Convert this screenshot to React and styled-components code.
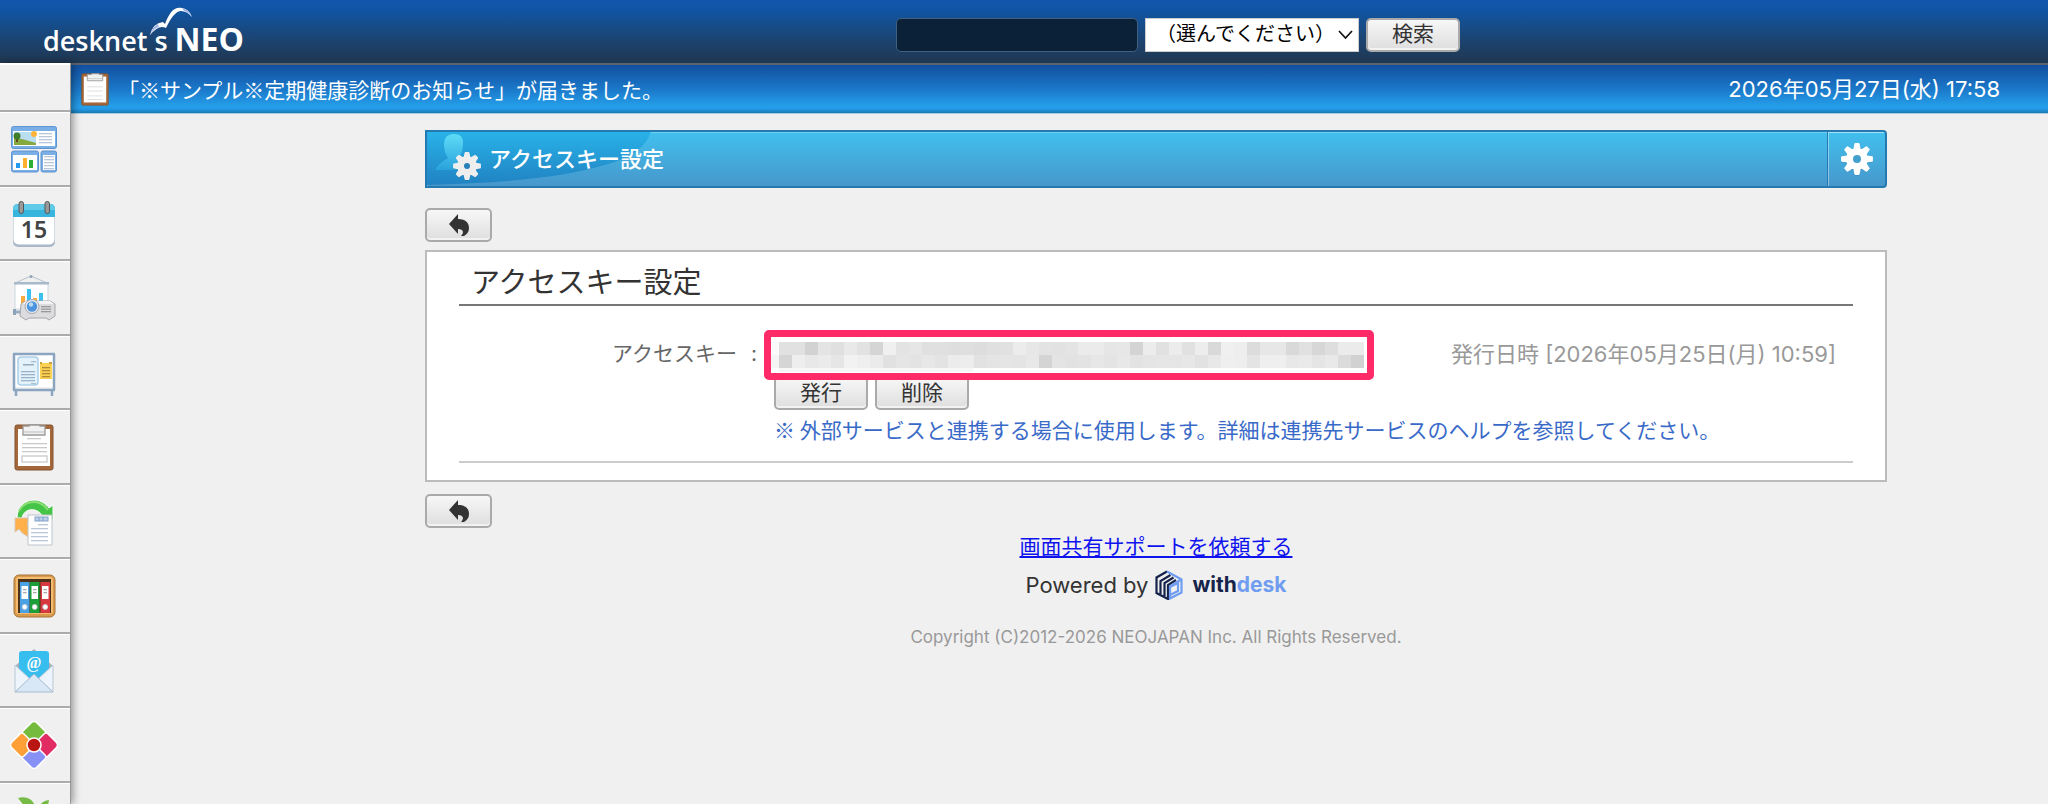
import React from "react";
import styled, { createGlobalStyle } from "styled-components";

const japanese = `"Noto Sans CJK JP", sans-serif`;

const GlobalStyle = createGlobalStyle`
  *, *::before, *::after { box-sizing: border-box; }
  html, body { margin: 0; padding: 0; }
  body {
    background: #f0f0f0;
    color: #333;
    font-family: Inter, ${japanese};
    font-size: 21px;
    line-height: 30px;
  }
  button, input, select { font: inherit; }
  h1, h2, p { margin: 0; }
`;

const Page = styled.div`
  display: flex;
  flex-direction: column;
  height: 100vh;
  overflow: hidden;
`;

const Header = styled.header`
  display: flex;
  flex: none;
  align-items: center;
  height: 63px;
  background: linear-gradient(#1156ab, #1055a4 16%, #1b4574 60%, #203750);
`;

const Brand = styled.a`
  display: flex;
  align-items: flex-end;
  flex: none;
  width: 308px;
  height: 63px;
  padding: 0 0 4px 43px;
  color: #fff;
  font-family: "Open Sans", sans-serif;
  text-decoration: none;
`;

const BrandName = styled.span`
  font-size: 27px;
  font-weight: 600;
  line-height: 36px;
`;

const BrandEdition = styled.span`
  margin-left: 7px;
  font-size: 32px;
  font-weight: 700;
  line-height: 40px;
`;

const BrandBird = styled.svg`
  position: absolute;
  left: 148px;
  top: 7px;
  width: 46px;
  height: 30px;
`;

const Search = styled.form`
  display: flex;
  gap: 7px;
  margin: 6px auto 0;
`;

const SearchInput = styled.input`
  width: 242px;
  height: 34px;
  padding: 0 8px;
  border: 1px solid #41607f;
  border-radius: 5px;
  background: #0b2137;
  color: #fff;
`;

const SelectBox = styled.div`
  position: relative;
  width: 214px;

  svg {
    position: absolute;
    right: 6px;
    top: 12px;
    pointer-events: none;
  }
`;

const Select = styled.select`
  width: 100%;
  height: 34px;
  padding: 0 24px 2px 10px;
  appearance: none;
  border: 1px solid #ccc;
  border-radius: 0;
  background: #fff;
  color: #000;
  font-size: 20px;
`;

const Button = styled.button`
  display: inline-flex;
  align-items: center;
  justify-content: center;
  width: ${(p) => (p.$icon ? 67 : 94)}px;
  height: 34px;
  padding: 0 0 1px;
  border: 2px solid #aaa;
  border-radius: 5px;
  background: linear-gradient(#f7f7f7, #dedede);
  box-shadow: inset 0 -2px 0 #f2f2f2;
  color: #333;
  line-height: 28px;
`;

const Body = styled.div`
  display: flex;
  flex: 1;
  min-height: 0;
`;

const Sidebar = styled.nav`
  position: relative;
  flex: none;
  width: 71px;
  border-right: 1px solid #999;
  background: #f0f0f0;
  box-shadow: 2px 0 8px rgba(0, 0, 0, 0.4);
`;

const AppList = styled.ul`
  margin: 0;
  padding: 45px 0 0;
  border-top: 2px solid #fff;
  list-style: none;
`;

const AppItem = styled.li`
  height: 75px;
  border-top: 2px solid #ababab;

  &:nth-child(even) { height: 74px; }
`;

const AppLink = styled.a`
  display: flex;
  justify-content: center;
  padding: 12px 3px 0 0;
  height: 100%;
  border-top: 1px solid #fff;

  svg { width: 48px; height: 48px; }
`;

const Column = styled.div`
  flex: 1;
  min-width: 0;
`;

const Ticker = styled.div`
  display: flex;
  align-items: center;
  height: 51px;
  padding: 0 48px 0 10px;
  border-top: 2px solid #5a6470;
  border-bottom: 1px solid #a8cde0;
  background: linear-gradient(#124f9f, #1b78c9 50%, #259ee9 86%, #249bea 91%, #1b79b2);
  color: #fff;

  svg { flex: none; margin-right: 9px; }
  p { font-family: ${japanese}; }
  time { margin-left: auto; font-size: 22px; }
`;

const Main = styled.main`
  padding: 16px 0 0 193px;
`;

const Content = styled.div`
  width: 100%;
  max-width: 1462px;
  margin: 0 auto;
`;

const TitleBar = styled.div`
  display: flex;
  height: 58px;
  border: 2px solid #2379b0;
  border-radius: 0 4px 4px 0;
  background: linear-gradient(#41c0ee, #4797cb);
  box-shadow: inset 1px 1px 0 rgba(255, 255, 255, 0.25);
  overflow: hidden;
`;

const TitleArt = styled.svg`
  flex: none;
  width: 226px;
  height: 54px;
`;

const Title = styled.h1`
  flex: 1;
  margin-left: -164px;
  color: #fff;
  font-size: 22px;
  font-weight: 500;
  line-height: 54px;
`;

const SettingsLink = styled.a`
  display: flex;
  align-items: center;
  justify-content: center;
  width: 58px;
  border-left: 1px solid #2379b0;
  box-shadow: inset 1px 1px 0 rgba(255, 255, 255, 0.4);
`;

const Toolbar = styled.div`
  display: flex;
  padding: ${(p) => (p.$bottom ? "12px 0 0" : "20px 0 8px")};
`;

const Panel = styled.section`
  padding: 10px 32px 17px;
  border: 2px solid #bbb;
  background: #fff;
`;

const PanelTitle = styled.h2`
  padding-left: 12px;
  border-bottom: 2px solid #777;
  font-size: 29px;
  font-weight: 400;
  line-height: 42px;
`;

const Row = styled.div`
  display: grid;
  grid-template-columns: 298px 1fr;
  column-gap: 17px;
  padding: 33px 17px 17px 0;
  border-bottom: 2px solid #ccc;
`;

const RowLabel = styled.div`
  display: flex;
  justify-content: flex-end;
  gap: 14px;
  color: #666;
`;

const KeyLine = styled.div`
  position: relative;
  display: flex;
  justify-content: flex-end;
  height: 37px;
  color: #999;
  font-size: 22px;
`;

const KeyHighlight = styled.div`
  position: absolute;
  left: -10px;
  top: -9px;
  width: 610px;
  height: 50px;
  padding: 5px 0;
  border: 7px solid #ff2a68;
  border-radius: 5px;
  background: #fff;

  svg { display: block; }
`;

const Actions = styled.div`
  display: flex;
  gap: 7px;
`;

const Note = styled.p`
  margin-top: 4px;
  color: #3a6ac8;
  font-family: ${japanese};
`;

const Footer = styled.footer`
  display: flex;
  flex-direction: column;
  align-items: center;
  padding-top: 4px;

  a { color: #0f13ee; }
  small { margin-top: 22px; color: #999; font-size: 17px; }
`;

const Powered = styled.p`
  display: flex;
  align-items: center;
  margin-top: 8px;
  font-size: 22px;

  svg { margin: 0 9px 0 7px; }
`;

const WithDesk = styled.b`
  color: #16234b;
  font-size: 21px;
  font-weight: 700;
  span { color: #709df0; }
`;

const lines = (x, w, ys, color = "#b8c7da") =>
  ys.map((y) => <rect key={y} x={x} y={y} width={w} height="1.3" fill={color} />);

const PortalIcon = () => (
  <svg viewBox="0 0 48 48">
    <g fill="#79aee6" stroke="#5d94d2">
      <rect x="1.5" y="1.5" width="45" height="22" rx="2" />
      <rect x="1.5" y="26" width="27" height="21" rx="2" />
      <rect x="31" y="26" width="15.5" height="21" rx="2" />
    </g>
    <g fill="#fff">
      <rect x="3" y="6" width="42" height="15" />
      <rect x="3" y="30" width="24" height="15" />
      <rect x="33" y="30" width="12" height="15" />
    </g>
    <rect x="4" y="7" width="22" height="13" fill="#b9def0" />
    <path d="M4 20v-7l8 1 14 4v2z" fill="#83a93f" />
    <path d="M7 17v-4" stroke="#65451b" strokeWidth="2" />
    <circle cx="7" cy="11" r="3.5" fill="#3f7c2c" />
    <circle cx="24" cy="9" r="3" fill="#ffb43b" />
    {lines(29, 13, [8, 11, 14, 17])}
    {lines(34, 10, [31, 34, 37, 40, 43])}
    <rect x="6" y="38" width="4" height="5" fill="#239aef" />
    <rect x="13" y="33" width="4" height="10" fill="#ffaf2b" />
    <rect x="19" y="35" width="4" height="8" fill="#2dae37" />
  </svg>
);

const CalendarIcon = () => (
  <svg viewBox="0 0 48 48">
    <rect x="3" y="5" width="42" height="42" rx="5" fill="#a9b9c9" />
    <rect x="3.5" y="5" width="41" height="39.5" rx="5" fill="#fff" />
    <path d="M3 17V9q0-5 5-5h32q5 0 5 5v8z" fill="#38b5dd" />
    <path d="M3 10q0-6 5-6h32q5 0 5 6z" fill="#5fcbe9" />
    {[11, 37].map((x) => (
      <rect key={x} x={x - 2} y="1.5" width="4.5" height="12" rx="2.2" fill="#9a9a9a" stroke="#555" />
    ))}
    <text x="24" y="38" textAnchor="middle" fontFamily="Noto Sans, sans-serif" fontWeight="600" fontSize="23" fill="#444">15</text>
  </svg>
);

const ProjectorIcon = () => (
  <svg viewBox="0 0 48 48">
    <path d="M5 9 21 2l16 7" fill="none" stroke="#b5c2d1" />
    <circle cx="21" cy="2.5" r="1.5" fill="#91a4b8" />
    <rect x="5" y="9" width="33" height="26" fill="#fff" stroke="#ccd5dc" />
    <rect x="4" y="8" width="35" height="2.5" fill="#a8b9cc" />
    <rect x="11" y="22" width="4" height="10" fill="#ffaa3e" />
    <rect x="17" y="15" width="4" height="14" fill="#3cc0f2" />
    <rect x="23" y="24" width="4" height="8" fill="#ffaa3e" />
    <rect x="29" y="19" width="4" height="10" fill="#3cc0f2" />
    <path d="M4 38h9" stroke="#9aaec2" strokeWidth="3" />
    <rect x="3" y="35" width="3" height="6" fill="#8ea3b8" />
    <path d="m11 30 5-3h24l5 3v12l-3 2-3 2-3-2H19l-3 2-3-2-3-2z" fill="#dcdcdf" stroke="#a4a6aa" />
    <path d="M12 30h32l-4-3H16z" fill="#f4f4f6" />
    <circle cx="22" cy="32.5" r="7" fill="#e8ebf0" stroke="#a6a8b0" />
    <circle cx="22" cy="32.5" r="5.2" fill="#4c94de" />
    <circle cx="21" cy="30.5" r="2.2" fill="#b9ddf7" />
    {lines(31, 10, [32, 34.5, 37], "#999")}
  </svg>
);

const BoardIcon = () => (
  <svg viewBox="0 0 48 48">
    <rect x="5" y="6" width="38" height="32" fill="#fff" />
    <path d="M3 5h42M4 5v36M44 5v36M3 41h42M6 42v5M42 42v5" fill="none" stroke="#8ba4c0" strokeWidth="2.5" />
    <rect x="8" y="8" width="20" height="28" rx="3" fill="#e4f2fb" stroke="#abcfe8" strokeWidth="1.5" />
    {lines(11, 14, [22, 25, 28, 31], "#9bb2cb")}
    <rect x="13" y="15" width="11" height="1.5" fill="#96acbf" />
    {lines(21, 5, [12, 34], "#a9bfd5")}
    <rect x="30" y="14" width="12" height="16" fill="#fbd152" />
    {lines(32, 8, [18, 21, 24, 27], "#b08a36")}
    <path d="M30 14h2m7 0h3" stroke="#c8a13c" strokeWidth="2" />
  </svg>
);

const ClipboardArt = () => (
  <>
    <rect x="5" y="2" width="38" height="45" rx="2" fill="#a3673a" stroke="#855330" />
    <path d="M8 6h32v37H8z" fill="#fff" />
    <path d="M13 3h6V2h11v1h5v9H13z" fill="#f1f1f1" stroke="#999" strokeWidth="1.3" />
    <path d="M14 9h20" stroke="#bbb" />
  </>
);

const ClipboardIcon = () => (
  <svg viewBox="0 0 48 48">
    <ClipboardArt />
    {lines(17, 14, [15], "#ccc")}
    {lines(12, 25, [20, 24, 28], "#c9c9c9")}
    <rect x="12" y="33" width="25" height="6" fill="none" stroke="#c9c9c9" strokeWidth="1.3" />
  </svg>
);

const WorkflowIcon = () => (
  <svg viewBox="0 0 48 48">
    <path d="M7 20C7 9 15 2 24 2c7 0 12 4 15 8l4-3v15H27l5-5C26 9 14 10 12 20z" fill="#44c547" stroke="#fff" />
    <path d="M9 13C12 7 18 4 24 4c7 0 11 4 14 8" fill="none" stroke="#8dde77" strokeWidth="2" />
    <path d="M5 20h17l-5 5 6 9-4 5c-5-2-8-5-10-8l-4 3z" fill="#ffb04a" stroke="#d8c8b8" />
    <path d="M18 17h24v30H18z" fill="#fff" stroke="#bcc3ca" />
    <rect x="25" y="19" width="13" height="4" fill="#bcd1e9" stroke="#83a1c8" />
    <path d="M29 19v4m4-4v4" stroke="#83a1c8" />
    {lines(28, 10, [26])}
    {lines(21, 17, [30, 34, 38, 42])}
  </svg>
);

const BindersIcon = () => (
  <svg viewBox="0 0 48 48">
    <rect x="4" y="3" width="41" height="42" rx="5" fill="#d99a4c" stroke="#a8743a" />
    <rect x="6" y="5" width="37" height="37" rx="3" fill="#f3bc71" />
    <rect x="8" y="7" width="33" height="34" fill="#4b3218" />
    {[["#4aa2e5", 10], ["#1c9f38", 20], ["#d63940", 30.5]].map(([fill, x]) => (
      <g key={x}>
        <rect x={x} y="10" width="9.5" height="31" fill={fill} />
        <rect x={x + 1.5} y="14" width="6.5" height="13" fill="#fff" />
        {lines(x + 3, 3.5, [17, 20], "#aaa")}
        <circle cx={x + 4.7} cy="35" r="2.4" fill="#fff" stroke="#d7d7df" />
      </g>
    ))}
  </svg>
);

const MailIcon = () => (
  <svg viewBox="0 0 48 48">
    <path d="m5 19 19-17 19 17v26H5z" fill="#a7b1bb" />
    <path d="M9 7q0-3 3-3h24q3 0 3 3v26H9z" fill="#38bdef" />
    <path d="m5 18 15 14L5 45zM43 18 28 32l15 13z" fill="#edf4fb" stroke="#b8c7d6" />
    <path d="m5 45 19-18 19 18z" fill="#d8e8f7" stroke="#a9bacb" />
    <text x="24" y="21" textAnchor="middle" fontFamily="Liberation Serif, serif" fontWeight="700" fontSize="16" fill="#fff">@</text>
  </svg>
);

const AppSuiteIcon = () => (
  <svg viewBox="0 0 48 48">
    <g stroke="#fff" strokeWidth="1.5">
      {[["#75bb3d", 0], ["#e02c62", 90], ["#8790f4", 180], ["#ff9f38", 270]].map(([fill, a]) => (
        <path key={a} d="M21 2q3-3 6 0l8 8q2 2 0 4l-8 8h-6l-8-8q-2-2 0-4z" fill={fill} transform={`rotate(${a} 24 24)`} />
      ))}
      <circle cx="24" cy="24" r="7" fill="#b91613" />
    </g>
  </svg>
);

const LeafIcon = () => (
  <svg viewBox="0 0 48 48">
    <path d="M8 2q13-3 17 8l1 14Q13 22 15 11zM28 14q2-9 11-10-1 9-9 18z" fill="#77bb46" />
  </svg>
);

const TickerClipboard = () => (
  <svg viewBox="4 1 40 47" width="28" height="33" aria-hidden="true">
    <ClipboardArt />
    {lines(13, 22, [20, 26, 33, 38], "#ddd")}
  </svg>
);

const gearPath = (teeth, outer, inner) => {
  const step = (Math.PI * 2) / teeth;
  const at = (r, a) => `${(r * Math.sin(a)).toFixed(2)} ${(-r * Math.cos(a)).toFixed(2)}`;
  return (
    Array.from({ length: teeth }, (_, i) => {
      const a = i * step;
      return [at(inner, a - step * 0.34), at(outer, a - step * 0.14), at(outer, a + step * 0.14), at(inner, a + step * 0.34)]
        .map((pt, j) => `${i === 0 && j === 0 ? "M" : "L"}${pt}`)
        .join("");
    }).join("") + "Z"
  );
};

const Gear = ({ inner, outer, color, hole, holeSize }) => (
  <g>
    <path d={gearPath(8, outer, inner)} transform="translate(0 1)" fill="#145885" opacity="0.45" stroke="#145885" strokeLinejoin="round" />
    <path d={gearPath(8, outer, inner)} fill={color} stroke={color} strokeWidth="2" strokeLinejoin="round" />
    <circle r={holeSize} fill={hole} />
  </g>
);

const BackArrow = () => (
  <svg width="20" height="22" viewBox="0 0 20 22" aria-hidden="true">
    <path d="M0 10 9 0v5c8 0 11 4 11 9 0 4-2 6-5 8h-3c3-3 3-7-3-7v5z" fill="#333" />
  </svg>
);

const BackButton = () => (
  <Button type="button" $icon aria-label="戻る">
    <BackArrow />
  </Button>
);

const mosaicRows = [
  "fbe1e1d2e4e0e9e2d5f0e3e6e0e0dedfdde0e1ece7e3e2e4ebebe6e7d4ece1ece1edd9f0eedce7e7d9e1d7deebeb",
  "f5d5eee8ebe6f2efebe1e5e3e7e3ecede2e4e5e4e8d4e4e2e3e7e4e8e3e5e6e5e7e2e8efeee4efefe8eae5e9dbd1",
];

const KeyMosaic = () => (
  <svg width="596" height="30" role="img" aria-label="アクセスキー">
    {mosaicRows.map((row, r) =>
      row.match(/../g).map((v, i) => (
        <rect
          key={`${r}-${i}`}
          x={i === 0 ? 0 : 8 + (i - 1) * 13}
          y={r * 13}
          width={i === 0 ? 8 : 13}
          height="13"
          fill={`#${v}${v}${v}`}
        />
      ))
    )}
    <rect x="8" y="26" width="194" height="4" fill="#f7f7f7" />
  </svg>
);

const WithDeskLogo = () => (
  <svg width="28" height="30" viewBox="0 0 28 30" aria-hidden="true">
    <path d="M12 1.5 1.5 7.500v15.500l11.500 6V15l8-5M5.500 24V11l10-6M9.500 26V13l9-5.500" fill="none" stroke="#16234b" strokeWidth="2.2" />
    <path d="m12 1.500 14.500 8v13L15 28.500V16.500l11-7M15 17l8-4v8l-8 4" fill="none" stroke="#709df0" strokeWidth="2.2" />
  </svg>
);

const apps = [
  ["ポータル", PortalIcon],
  ["スケジュール", CalendarIcon],
  ["設備予約", ProjectorIcon],
  ["インフォメーション", BoardIcon],
  ["回覧・レポート", ClipboardIcon],
  ["ワークフロー", WorkflowIcon],
  ["文書管理", BindersIcon],
  ["ウェブメール", MailIcon],
  ["AppSuite", AppSuiteIcon],
  ["その他", LeafIcon],
];

export default function App() {
  return (
    <Page>
      <GlobalStyle />
      <Header>
        <Brand href="#home">
          <BrandName>desknet</BrandName>
          <BrandBird viewBox="0 0 46 30" aria-hidden="true">
            <path d="M2 28Q5 16 15 15l2 2C21 6 26-1 34 1q7 1 10 9-5-6-11-6-7 0-15 17-7-4-16 7z" fill="#fff" />
            <path d="M34 1q7 1 10 9-4-5-8-6zM2 28q3-9 8-11l1 3q-5 1-9 8z" fill="#a3b5e2" />
          </BrandBird>
          <BrandName>&nbsp;s</BrandName>
          <BrandEdition>NEO</BrandEdition>
        </Brand>
        <Search onSubmit={(e) => e.preventDefault()}>
          <SearchInput type="text" aria-label="検索キーワード" />
          <SelectBox>
            <Select aria-label="検索対象">
              <option>（選んでください）</option>
            </Select>
            <svg width="15" height="10" viewBox="0 0 15 10" aria-hidden="true">
              <path d="m1 1 6.5 7L14 1" fill="none" stroke="#111" strokeWidth="1.7" />
            </svg>
          </SelectBox>
          <Button type="submit">検索</Button>
        </Search>
      </Header>
      <Body>
        <Sidebar aria-label="アプリケーション">
          <AppList>
            {apps.map(([name, Icon]) => (
              <AppItem key={name}>
                <AppLink href="#app" aria-label={name}>
                  <Icon />
                </AppLink>
              </AppItem>
            ))}
          </AppList>
        </Sidebar>
        <Column>
          <Ticker>
            <TickerClipboard />
            <p>「※サンプル※定期健康診断のお知らせ」が届きました。</p>
            <time>2026年05月27日(水) 17:58</time>
          </Ticker>
          <Main>
            <Content>
              <TitleBar>
                <TitleArt viewBox="0 0 226 54" aria-hidden="true">
                  <defs>
                    <linearGradient id="wave" x2="0" y2="1">
                      <stop stopColor="#29b2e8" />
                      <stop offset="1" stopColor="#2082c2" />
                    </linearGradient>
                    <linearGradient id="person" x2="0" y2="1">
                      <stop stopColor="#5edcf6" />
                      <stop offset="1" stopColor="#29a2dc" />
                    </linearGradient>
                  </defs>
                  <path d="M0 0h224q-8 24-50 34Q120 50 0 53z" fill="url(#wave)" />
                  <path d="M27 2q10 0 9 11-1 10-5 13v12H8q4-7 13-12-4-6-4-13 0-11 10-11z" fill="url(#person)" />
                  <g transform="translate(40 34)">
                    <Gear inner={9} outer={13} color="#eee" hole="#287fba" holeSize={3} />
                  </g>
                </TitleArt>
                <Title>アクセスキー設定</Title>
                <SettingsLink href="#settings" aria-label="設定">
                  <svg width="36" height="36" viewBox="-18 -18 36 36" aria-hidden="true">
                    <Gear inner={10} outer={15} color="#fff" hole="#449fcf" holeSize={4} />
                  </svg>
                </SettingsLink>
              </TitleBar>
              <Toolbar>
                <BackButton />
              </Toolbar>
              <Panel>
                <PanelTitle>アクセスキー設定</PanelTitle>
                <Row>
                  <RowLabel>
                    <span>アクセスキー</span>
                    <span>:</span>
                  </RowLabel>
                  <div>
                    <KeyLine>
                      <KeyHighlight>
                        <KeyMosaic />
                      </KeyHighlight>
                      <span>発行日時 [2026年05月25日(月) 10:59]</span>
                    </KeyLine>
                    <Actions>
                      <Button type="button">発行</Button>
                      <Button type="button">削除</Button>
                    </Actions>
                    <Note>※ 外部サービスと連携する場合に使用します。詳細は連携先サービスのヘルプを参照してください。</Note>
                  </div>
                </Row>
              </Panel>
              <Toolbar $bottom>
                <BackButton />
              </Toolbar>
              <Footer>
                <a href="#support">画面共有サポートを依頼する</a>
                <Powered>
                  Powered by
                  <WithDeskLogo />
                  <WithDesk>
                    with<span>desk</span>
                  </WithDesk>
                </Powered>
                <small>Copyright (C)2012-2026 NEOJAPAN Inc. All Rights Reserved.</small>
              </Footer>
            </Content>
          </Main>
        </Column>
      </Body>
    </Page>
  );
}
